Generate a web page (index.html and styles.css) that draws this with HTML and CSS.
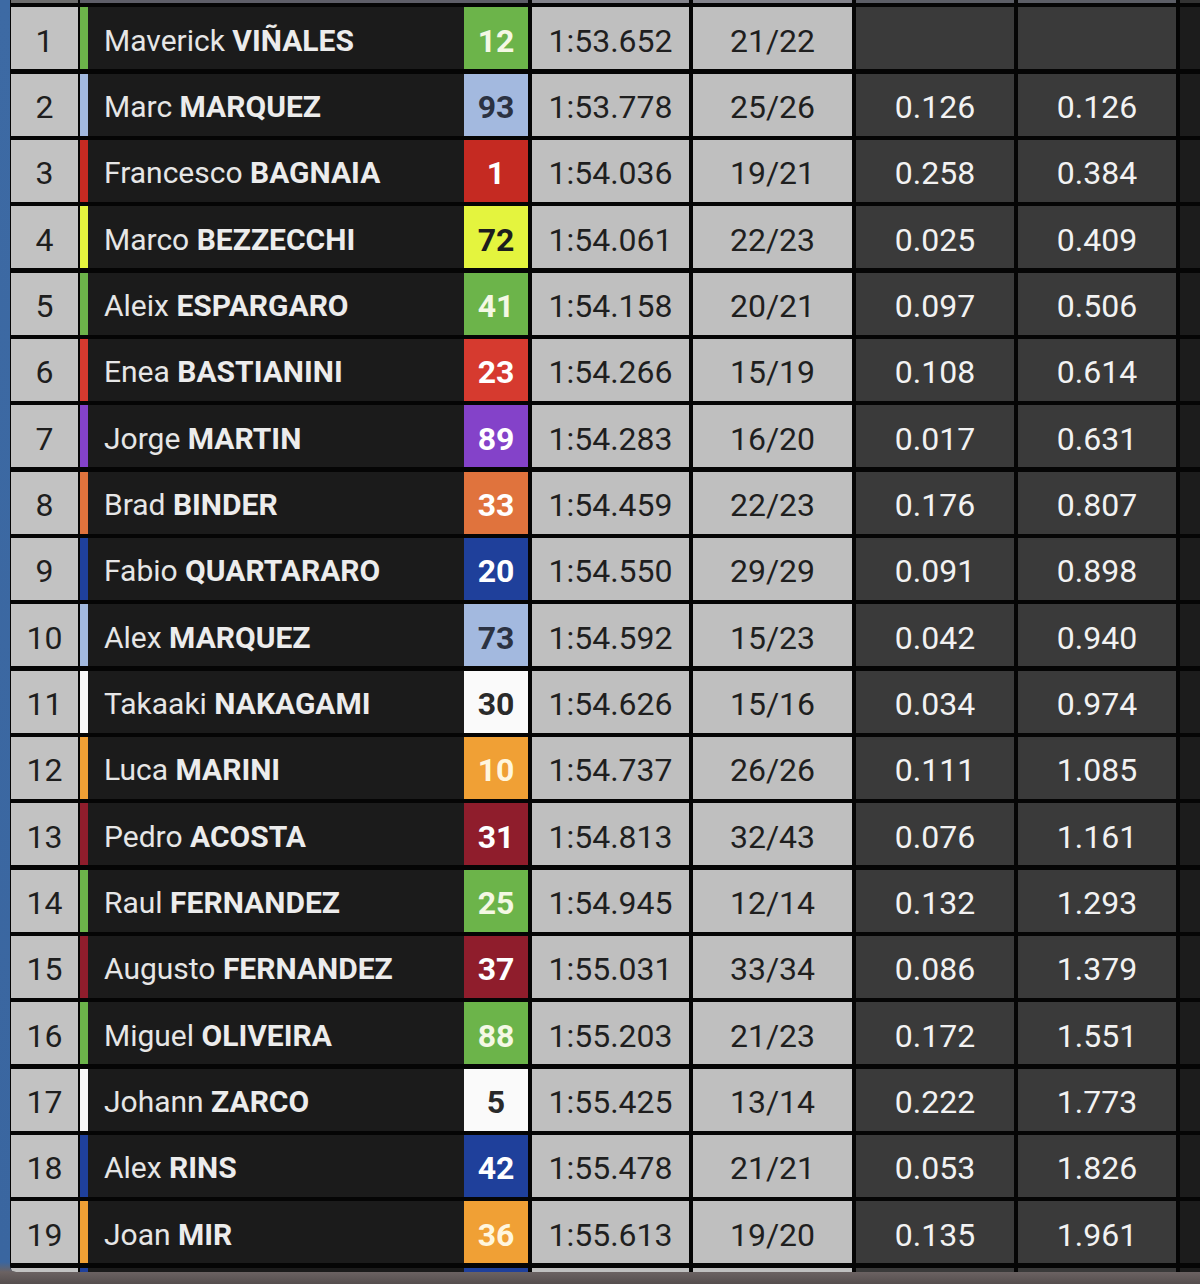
FILE: index.html
```html
<!DOCTYPE html>
<html lang="en">
<head>
<meta charset="utf-8">
<title>Timing</title>
<link rel="stylesheet" href="styles.css">
</head>
<body>
<div class="board">
  <div class="row head">
    <div class="c-pos"></div><div class="c-drv"></div><div class="c-time"></div><div class="c-laps"></div><div class="c-gap"></div><div class="c-gap"></div><div class="c-end"></div>
  </div>

  <div class="row" style="--team:#6cb44a;--num:#f4f8e4">
    <div class="c-pos">1</div>
    <div class="c-drv"><span class="bar"></span><span class="name">Maverick <b>VIÑALES</b></span><span class="num">12</span></div>
    <div class="c-time">1:53.652</div><div class="c-laps">21/22</div><div class="c-gap"></div><div class="c-gap"></div><div class="c-end"></div>
  </div>
  <div class="row" style="--team:#a3b9df;--num:#2b3242">
    <div class="c-pos">2</div>
    <div class="c-drv"><span class="bar"></span><span class="name">Marc <b>MARQUEZ</b></span><span class="num">93</span></div>
    <div class="c-time">1:53.778</div><div class="c-laps">25/26</div><div class="c-gap">0.126</div><div class="c-gap">0.126</div><div class="c-end"></div>
  </div>
  <div class="row" style="--team:#c52a22;--num:#ffffff">
    <div class="c-pos">3</div>
    <div class="c-drv"><span class="bar"></span><span class="name">Francesco <b>BAGNAIA</b></span><span class="num">1</span></div>
    <div class="c-time">1:54.036</div><div class="c-laps">19/21</div><div class="c-gap">0.258</div><div class="c-gap">0.384</div><div class="c-end"></div>
  </div>
  <div class="row" style="--team:#e4f43e;--num:#1d1d1d">
    <div class="c-pos">4</div>
    <div class="c-drv"><span class="bar"></span><span class="name">Marco <b>BEZZECCHI</b></span><span class="num">72</span></div>
    <div class="c-time">1:54.061</div><div class="c-laps">22/23</div><div class="c-gap">0.025</div><div class="c-gap">0.409</div><div class="c-end"></div>
  </div>
  <div class="row" style="--team:#6cb44a;--num:#f4f8e4">
    <div class="c-pos">5</div>
    <div class="c-drv"><span class="bar"></span><span class="name">Aleix <b>ESPARGARO</b></span><span class="num">41</span></div>
    <div class="c-time">1:54.158</div><div class="c-laps">20/21</div><div class="c-gap">0.097</div><div class="c-gap">0.506</div><div class="c-end"></div>
  </div>
  <div class="row" style="--team:#d63a2f;--num:#ffffff">
    <div class="c-pos">6</div>
    <div class="c-drv"><span class="bar"></span><span class="name">Enea <b>BASTIANINI</b></span><span class="num">23</span></div>
    <div class="c-time">1:54.266</div><div class="c-laps">15/19</div><div class="c-gap">0.108</div><div class="c-gap">0.614</div><div class="c-end"></div>
  </div>
  <div class="row" style="--team:#8442c9;--num:#ffffff">
    <div class="c-pos">7</div>
    <div class="c-drv"><span class="bar"></span><span class="name">Jorge <b>MARTIN</b></span><span class="num">89</span></div>
    <div class="c-time">1:54.283</div><div class="c-laps">16/20</div><div class="c-gap">0.017</div><div class="c-gap">0.631</div><div class="c-end"></div>
  </div>
  <div class="row" style="--team:#e0733d;--num:#ffffff">
    <div class="c-pos">8</div>
    <div class="c-drv"><span class="bar"></span><span class="name">Brad <b>BINDER</b></span><span class="num">33</span></div>
    <div class="c-time">1:54.459</div><div class="c-laps">22/23</div><div class="c-gap">0.176</div><div class="c-gap">0.807</div><div class="c-end"></div>
  </div>
  <div class="row" style="--team:#1f409b;--num:#ffffff">
    <div class="c-pos">9</div>
    <div class="c-drv"><span class="bar"></span><span class="name">Fabio <b>QUARTARARO</b></span><span class="num">20</span></div>
    <div class="c-time">1:54.550</div><div class="c-laps">29/29</div><div class="c-gap">0.091</div><div class="c-gap">0.898</div><div class="c-end"></div>
  </div>
  <div class="row" style="--team:#a3b9df;--num:#2b3242">
    <div class="c-pos">10</div>
    <div class="c-drv"><span class="bar"></span><span class="name">Alex <b>MARQUEZ</b></span><span class="num">73</span></div>
    <div class="c-time">1:54.592</div><div class="c-laps">15/23</div><div class="c-gap">0.042</div><div class="c-gap">0.940</div><div class="c-end"></div>
  </div>
  <div class="row" style="--team:#fafafa;--num:#2a2a2a">
    <div class="c-pos">11</div>
    <div class="c-drv"><span class="bar"></span><span class="name">Takaaki <b>NAKAGAMI</b></span><span class="num">30</span></div>
    <div class="c-time">1:54.626</div><div class="c-laps">15/16</div><div class="c-gap">0.034</div><div class="c-gap">0.974</div><div class="c-end"></div>
  </div>
  <div class="row" style="--team:#f0a035;--num:#fff6de">
    <div class="c-pos">12</div>
    <div class="c-drv"><span class="bar"></span><span class="name">Luca <b>MARINI</b></span><span class="num">10</span></div>
    <div class="c-time">1:54.737</div><div class="c-laps">26/26</div><div class="c-gap">0.111</div><div class="c-gap">1.085</div><div class="c-end"></div>
  </div>
  <div class="row" style="--team:#8f1d2c;--num:#ffffff">
    <div class="c-pos">13</div>
    <div class="c-drv"><span class="bar"></span><span class="name">Pedro <b>ACOSTA</b></span><span class="num">31</span></div>
    <div class="c-time">1:54.813</div><div class="c-laps">32/43</div><div class="c-gap">0.076</div><div class="c-gap">1.161</div><div class="c-end"></div>
  </div>
  <div class="row" style="--team:#6cb44a;--num:#f4f8e4">
    <div class="c-pos">14</div>
    <div class="c-drv"><span class="bar"></span><span class="name">Raul <b>FERNANDEZ</b></span><span class="num">25</span></div>
    <div class="c-time">1:54.945</div><div class="c-laps">12/14</div><div class="c-gap">0.132</div><div class="c-gap">1.293</div><div class="c-end"></div>
  </div>
  <div class="row" style="--team:#8f1d2c;--num:#ffffff">
    <div class="c-pos">15</div>
    <div class="c-drv"><span class="bar"></span><span class="name">Augusto <b>FERNANDEZ</b></span><span class="num">37</span></div>
    <div class="c-time">1:55.031</div><div class="c-laps">33/34</div><div class="c-gap">0.086</div><div class="c-gap">1.379</div><div class="c-end"></div>
  </div>
  <div class="row" style="--team:#6cb44a;--num:#f4f8e4">
    <div class="c-pos">16</div>
    <div class="c-drv"><span class="bar"></span><span class="name">Miguel <b>OLIVEIRA</b></span><span class="num">88</span></div>
    <div class="c-time">1:55.203</div><div class="c-laps">21/23</div><div class="c-gap">0.172</div><div class="c-gap">1.551</div><div class="c-end"></div>
  </div>
  <div class="row" style="--team:#fafafa;--num:#2a2a2a">
    <div class="c-pos">17</div>
    <div class="c-drv"><span class="bar"></span><span class="name">Johann <b>ZARCO</b></span><span class="num">5</span></div>
    <div class="c-time">1:55.425</div><div class="c-laps">13/14</div><div class="c-gap">0.222</div><div class="c-gap">1.773</div><div class="c-end"></div>
  </div>
  <div class="row" style="--team:#1f409b;--num:#ffffff">
    <div class="c-pos">18</div>
    <div class="c-drv"><span class="bar"></span><span class="name">Alex <b>RINS</b></span><span class="num">42</span></div>
    <div class="c-time">1:55.478</div><div class="c-laps">21/21</div><div class="c-gap">0.053</div><div class="c-gap">1.826</div><div class="c-end"></div>
  </div>
  <div class="row" style="--team:#f0a035;--num:#fff6de">
    <div class="c-pos">19</div>
    <div class="c-drv"><span class="bar"></span><span class="name">Joan <b>MIR</b></span><span class="num">36</span></div>
    <div class="c-time">1:55.613</div><div class="c-laps">19/20</div><div class="c-gap">0.135</div><div class="c-gap">1.961</div><div class="c-end"></div>
  </div>
  <div class="row tail" style="--team:#1f409b;--num:#ffffff">
    <div class="c-pos"></div>
    <div class="c-drv"><span class="bar"></span><span class="name"></span><span class="num"></span></div>
    <div class="c-time"></div><div class="c-laps"></div><div class="c-gap"></div><div class="c-gap"></div><div class="c-end"></div>
  </div>
</div>
</body>
</html>
```

FILE: styles.css
```css
html, body {
  margin: 0;
  padding: 0;
}
body {
  width: 1200px;
  height: 1284px;
  overflow: hidden;
  background: linear-gradient(to bottom, #3d6aa4 0, #3a66a0 1262px, #6b6262 1272px, #554e4e 1284px);
  font-family: Roboto, "Liberation Sans", sans-serif;
}
.board {
  margin-left: 10px;
  padding-left: 1px;
  height: 1272px;
  background: #050505;
  border-bottom-left-radius: 6px;
  display: flex;
  flex-direction: column;
  gap: 4.33px;
  overflow: hidden;
}
.row {
  display: grid;
  grid-template-columns: 66px 447px 157px 159px 158px 158px 1fr;
  column-gap: 4px;
  height: 62px;
  flex: none;
  font-size: 32px;
  line-height: 1;
}
.row > div {
  display: flex;
  align-items: center;
  justify-content: center;
  padding-top: 5px;
  box-sizing: border-box;
}
.row.head { height: 3px; }
.row.head > div { padding: 0; }
.row.head .c-pos { background: #6e6e6e; }
.row.head .c-drv { background: #5e5e68; }
.row.head .c-time, .row.head .c-laps { background: #84848c; }
.row.head .c-gap { background: #5c5e66; }
.row.head .c-end { background: #333; }
.row.tail { height: 10px; }
.row.tail > div { padding: 0; }

.c-pos {
  background: #c2c2c2;
  color: #1e1e1e;
  margin-right: -1px;
}
.c-drv {
  margin-left: -1px;
  background: #1b1b1b;
  justify-content: flex-start !important;
  align-items: stretch !important;
  padding-top: 0 !important;
}
.bar {
  width: 8px;
  flex: none;
  background: var(--team);
}
.name {
  flex: 1;
  display: flex;
  align-items: center;
  padding: 5px 0 0 16px;
  color: #e6e6e6;
  font-size: 30px;
  font-weight: 400;
  white-space: pre;
}
.name b {
  font-weight: 700;
  color: #ececec;
}
.num {
  width: 64px;
  flex: none;
  display: flex;
  align-items: center;
  justify-content: center;
  padding-top: 5px;
  box-sizing: border-box;
  background: var(--team);
  color: var(--num);
  font-weight: 700;
  font-size: 32px;
}
.c-time, .c-laps {
  background: #bfbfbf;
  color: #1f1f1f;
}
.c-gap {
  background: #3a3a3a;
  color: #f2f2f2;
}
.c-end {
  background: #1c1c1c;
}
```
